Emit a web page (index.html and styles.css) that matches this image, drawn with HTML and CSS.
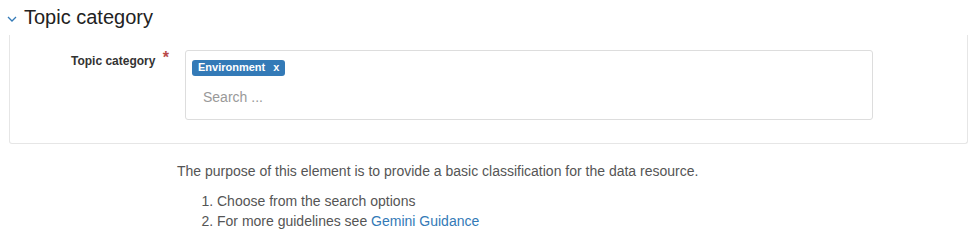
FILE: index.html
```html
<!DOCTYPE html>
<html lang="en">
<head>
    <meta charset="UTF-8" />
    <title>Topic category</title>
    <link rel="stylesheet" href="styles.css">
</head>
<body>
    <div class="section">
        <div class="section-title">
            <svg class="chevron" width="10" height="6" viewBox="0 0 10 6"><path d="M1 1 L5 5 L9 1" fill="none" stroke="#337ab7" stroke-width="1.3"/></svg>
            <span>Topic category</span>
        </div>
        <div class="section-body">
            <div class="form-row">
                <label class="form-label">Topic category <span class="required">*</span></label>
                <div class="tag-input">
                    <div class="tags">
                        <span class="tag">Environment <span class="tag-x">x</span></span>
                    </div>
                    <input type="text" class="search" placeholder="Search ...">
                </div>
            </div>
        </div>
    </div>
    <div class="help">
        <p>The purpose of this element is to provide a basic classification for the data resource.</p>
        <ol>
            <li>Choose from the search options</li>
            <li>For more guidelines see <a href="#">Gemini Guidance</a></li>
        </ol>
    </div>
</body>
</html>
```

FILE: styles.css
```css
body {
    margin: 0;
    font-family: "Liberation Sans", Arial, sans-serif;
    color: #333;
    background: #fff;
}
.section {
    padding: 0 9px 0 9px;
}
.section-title {
    display: flex;
    align-items: center;
    height: 35px;
    font-size: 20px;
    color: #222;
}
.section-title .chevron {
    margin: 2px 7px 0 -2px;
}
.section-body {
    border: 1px solid #e6e6e6;
    border-top: none;
    border-radius: 0 0 3px 3px;
    height: 109px;
    box-sizing: border-box;
}
.form-row {
    display: flex;
    padding-top: 15px;
}
.form-label {
    width: 175px;
    padding-right: 16px;
    text-align: right;
    font-size: 12px;
    font-weight: bold;
    color: #333;
    padding-top: 4px;
    box-sizing: border-box;
}
.required {
    color: #b94a48;
    font-size: 16px;
    margin-left: 4px;
    vertical-align: top;
    position: relative;
    top: -5px;
}
.tag-input {
    width: 688px;
    height: 70px;
    border: 1px solid #ddd;
    border-radius: 3px;
    box-sizing: border-box;
    padding: 9px 6px;
}
.tags {
    margin-top: -3px;
}
.tag {
    display: inline-block;
    background: #337ab7;
    color: #fff;
    font-size: 11px;
    font-weight: bold;
    padding: 1px 6px 2px 6px;
    border-radius: 3px;
    line-height: 13px;
}
.tag-x {
    margin-left: 5px;
}
.search {
    display: block;
    border: none;
    outline: none;
    font-family: inherit;
    font-size: 14px;
    margin: 13px 0 0 11px;
    padding: 0;
    color: #333;
}
.search::placeholder {
    color: #999;
}
.help {
    padding-left: 177px;
    font-size: 14px;
    color: #555;
}
.help p {
    margin: 18px 0 0 0;
    line-height: 18px;
}
.help ol {
    margin: 11px 0 0 0;
    padding-left: 40px;
    line-height: 20px;
}
.help a {
    color: #337ab7;
    text-decoration: none;
}
```
